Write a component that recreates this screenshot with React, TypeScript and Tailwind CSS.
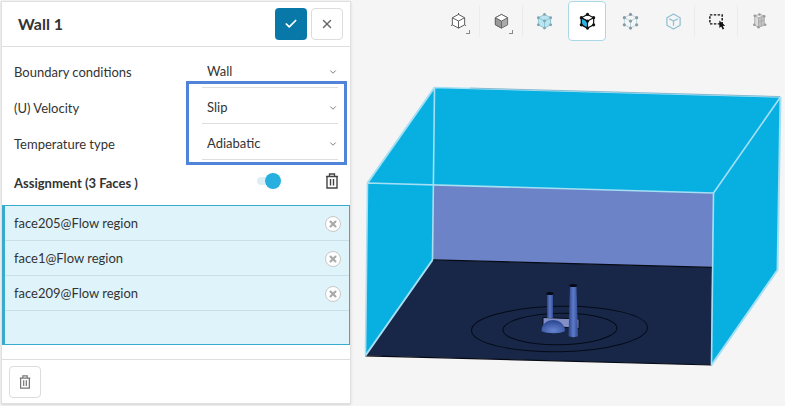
import React, { useState } from 'react';
import { Check, ChevronDown, X } from 'lucide-react';
import { clsx } from 'clsx';

type ToolId = 'wireframe' | 'solid' | 'volume' | 'face' | 'vertex' | 'edge' | 'box' | 'hidden';

const CUBE_OUTLINE = 'M9 1.5 15.5 5v7.5L9 16l-6.5-3.5V5z';
const CUBE_INNER = 'M2.5 5 9 8.5 15.5 5M9 8.5V16';
const CUBE_POINTS = [[9, 1.5], [15.5, 5], [15.5, 12.5], [9, 16], [2.5, 12.5], [2.5, 5], [9, 8.5]];

function Points({ fill, r }: { fill: string; r: number }) {
    return (
        <g fill={fill} stroke="none">
            {CUBE_POINTS.map(([x, y]) => (
                <circle key={`${x}-${y}`} cx={x} cy={y} r={r} />
            ))}
        </g>
    );
}

function ToolIcon({ id }: { id: ToolId }) {
    return (
        <svg viewBox="0 0 18 18" className="h-[17px] w-[17px] overflow-visible" fill="none" aria-hidden="true">
            {id === 'wireframe' && (
                <g stroke="#555" strokeWidth="1">
                    <path d={CUBE_OUTLINE} fill="#fff" />
                    <path d={CUBE_INNER} />
                    <path d="M9 0v2M2.5 12.5 1 13.5M15.5 12.5 17 13.5" />
                </g>
            )}
            {id === 'solid' && (
                <g stroke="#666" strokeWidth="1" strokeLinejoin="round">
                    <path d={CUBE_OUTLINE} fill="#aaa" />
                    <path d="M2.5 5 9 8.5V16l-6.5-3.5z" fill="#999" />
                    <path d="M9 1.5 15.5 5 9 8.5 2.5 5z" fill="#fff" />
                </g>
            )}
            {id === 'volume' && (
                <g stroke="#8cc5d6" strokeWidth="1">
                    <path d={CUBE_OUTLINE} fill="#b9e5f1" />
                    <path d={CUBE_INNER} />
                    <Points fill="#84a3ad" r={1.5} />
                </g>
            )}
            {id === 'face' && (
                <g stroke="#111" strokeWidth="1.2">
                    <path d={CUBE_OUTLINE} fill="#fff" />
                    <path d="M2.5 5 9 8.5V16l-6.5-3.5z" fill="#27b4e3" />
                    <path d={CUBE_INNER} />
                    <Points fill="#111" r={1.7} />
                </g>
            )}
            {id === 'vertex' && (
                <g stroke="#b9d5df" strokeWidth="1">
                    <path d={CUBE_OUTLINE} />
                    <path d={CUBE_INNER} />
                    <Points fill="#8a9ba3" r={1.7} />
                </g>
            )}
            {id === 'edge' && (
                <g stroke="#8fc0d1" strokeWidth="1.3" strokeLinejoin="round">
                    <path d="M9 1 16 5v8l-7 4-7-4V5z" />
                    <path d="M4.5 6.2 9 8.5l4.5-2.3M9 8.5v5" />
                </g>
            )}
            {id === 'box' && (
                <>
                    <path d="M2 2h13v9.5H2z" stroke="#111" strokeWidth="1.5" strokeDasharray="2.6 1.5" />
                    <path d="M12 8v8l2-1.6 1.5 3 1.6-.8-1.4-2.9 2.5-.2z" fill="#111" />
                </>
            )}
            {id === 'hidden' && (
                <g stroke="#aaa" strokeWidth="1">
                    <path d="M4 3 8 5v10l-4-2z" fill="#ddd" />
                    <path d="M8 5l6-2v10l-6 2z" fill="#c4c4c4" />
                    <path d="M4 3l5-1.5L14 3M11 4v10M14 7.5l-6 2" />
                    <g fill="#999" stroke="none">
                        <circle cx="4" cy="3" r="1.3" />
                        <circle cx="9" cy="1.5" r="1.3" />
                        <circle cx="14" cy="3.5" r="1.3" />
                        <circle cx="15" cy="12.5" r="1.3" />
                        <circle cx="8" cy="15" r="1.3" />
                        <circle cx="3.5" cy="12.5" r="1.3" />
                    </g>
                </g>
            )}
        </svg>
    );
}

function TrashIcon({ className }: { className: string }) {
    return (
        <svg viewBox="0 0 16 16" className={className} fill="none" stroke="currentColor" strokeWidth="1.4" aria-hidden="true">
            <path d="M2 3.5h12M5.5 3.5V1h5v2.5M3 3.5V15h10V3.5M6.5 6v6.5M9.5 6v6.5" />
        </svg>
    );
}

const tools: { id: ToolId; label: string; menu?: boolean; divider?: boolean }[] = [
    { id: 'wireframe', label: 'Wireframe', menu: true, divider: true },
    { id: 'solid', label: 'Shaded', menu: true, divider: true },
    { id: 'volume', label: 'Select volumes' },
    { id: 'face', label: 'Select faces' },
    { id: 'vertex', label: 'Select vertices' },
    { id: 'edge', label: 'Select edges', divider: true },
    { id: 'box', label: 'Box selection', divider: true },
    { id: 'hidden', label: 'Hide selection' },
];

function Toolbar() {
    const [active, setActive] = useState<ToolId>('face');

    return (
        <div className="flex items-center justify-end gap-0.5 pt-px pr-1">
            {tools.map((tool) => (
                <React.Fragment key={tool.id}>
                    <button
                        type="button"
                        aria-label={tool.label}
                        aria-pressed={active === tool.id}
                        onClick={() => setActive(tool.id)}
                        className={clsx(
                            'relative flex h-10 w-[38px] items-center justify-center rounded border',
                            active === tool.id ? 'border-[#a9d9e6] bg-white' : 'border-transparent',
                        )}
                    >
                        <ToolIcon id={tool.id} />
                        {tool.menu && <span className="absolute right-1.5 bottom-1.5 h-1 w-1 border-r border-b border-[#888]" />}
                    </button>
                    <span className={clsx('h-8 w-px', tool.divider && 'bg-[#ececec]')} />
                </React.Fragment>
            ))}
        </div>
    );
}

function Scene() {
    return (
        <svg viewBox="351 41 434 365" className="block w-full" role="img" aria-label="Flow region">
            <defs>
                <linearGradient id="pipe">
                    <stop offset="0" stopColor="#2d4484" />
                    <stop offset="0.5" stopColor="#5c7bcb" />
                    <stop offset="1" stopColor="#334b90" />
                </linearGradient>
                <radialGradient id="dome" cx="0.5" cy="0.8" r="0.7">
                    <stop offset="0" stopColor="#6685d0" />
                    <stop offset="1" stopColor="#2f4b98" />
                </radialGradient>
            </defs>

            {/* Walls and ceiling */}
            <path d="M434.5 87.5 780.5 97 777.5 270 711.5 365 713.5 193 432.5 260 365.5 355.5 367.5 183z" fill="#08b0e2" />
            <path d="M433 185 713.5 193 712 268 432.5 260z" fill="#6d83c8" />
            <path d="M713.5 193 780.5 97 777.5 270 711.5 365z" fill="#08b0e2" />

            {/* Floor */}
            <path d="M432.5 260 712 267.5 711.5 365 365.5 355.5z" fill="#182747" />
            <path d="M432.5 259.8 712 267.3M365.5 355.8 711.5 365" stroke="#060a14" strokeWidth="1.2" />
            <g fill="none" stroke="#050a18" strokeWidth="1">
                <ellipse cx="559.5" cy="329" rx="88" ry="22.7" transform="rotate(-1 559.5 329)" />
                <ellipse cx="560" cy="329" rx="57" ry="15.7" transform="rotate(-1 560 329)" />
            </g>

            {/* Model */}
            <path d="M543 317.5 579 319v9.5l-36-3z" fill="#8390c7" stroke="#080d1c" strokeWidth="1" />
            <path d="M547 294h6v24h-6z" fill="url(#pipe)" />
            <ellipse cx="550" cy="293.5" rx="3.7" ry="1.5" fill="#050914" />
            <path d="M541.5 331c0-6.5 5-11 11.5-11s12 4.5 12 11c-4 3-19 3-23.5 0z" fill="url(#dome)" />
            <path d="M570 286h6.5l1.5 50c-2 1.5-7 1.5-9.5 0z" fill="url(#pipe)" />
            <ellipse cx="573.2" cy="285.5" rx="3.9" ry="1.5" fill="#050914" />

            {/* Highlighted edges */}
            <g fill="none" stroke="#a5dff4" strokeWidth="1.6" strokeLinejoin="round">
                <path d="M434.5 87.5 780.5 97M367.5 183 713.5 193 711.5 365M434.5 87.5 432.5 260M780.5 97 713.5 193M367.5 183 365.5 355.5" />
                <path d="M434.5 87.5 367.5 183M432.5 260 365.5 355.5M780.5 97 777.5 270 711.5 365" strokeWidth="2" />
            </g>
            <path d="M470 88 780 96.5" stroke="#5f94ae" strokeWidth="0.5" />
        </svg>
    );
}

function SelectField({ id, label, options }: { id: string; label: string; options: string[] }) {
    return (
        <div className="flex h-9 items-center justify-between pr-3 pl-3">
            <label htmlFor={id} className="pt-1.5">{label}</label>
            <div className="relative h-full w-[136px] border-b border-[#dedede]">
                <select id={id} className="h-full w-full appearance-none bg-transparent pt-1 pl-[5px] outline-none">
                    {options.map((option) => (
                        <option key={option}>{option}</option>
                    ))}
                </select>
                <ChevronDown className="pointer-events-none absolute top-[15px] right-0 h-2.5 w-2.5 text-[#666]" />
            </div>
        </div>
    );
}

function SettingsPanel() {
    const [faces, setFaces] = useState(['face205@Flow region', 'face1@Flow region', 'face209@Flow region']);

    return (
        <section className="mt-px mb-px ml-px flex w-[350px] shrink-0 flex-col self-start border border-[#e0e0e0] bg-white shadow-sm">
            <header className="flex h-[45px] items-center gap-1 border-b border-[#dedede] pr-[7px] pl-4">
                <h1 className="flex-1 text-base font-bold">Wall 1</h1>
                <button type="button" aria-label="Apply" className="flex h-8 w-8 items-center justify-center rounded bg-[#0878a8] text-white">
                    <Check className="h-3.5 w-3.5" strokeWidth={3} />
                </button>
                <button type="button" aria-label="Close" className="flex h-8 w-8 items-center justify-center rounded border border-[#dcdcdc] text-[#666]">
                    <X className="h-3.5 w-3.5" strokeWidth={2.5} />
                </button>
            </header>

            <div className="relative pt-[5px]">
                <SelectField id="condition" label="Boundary conditions" options={['Wall', 'Symmetry']} />
                <SelectField id="velocity" label="(U) Velocity" options={['Slip', 'No-slip']} />
                <SelectField id="temperature" label="Temperature type" options={['Adiabatic', 'Fixed value']} />
                <div className="pointer-events-none absolute top-[34px] right-[3px] -bottom-[5px] w-[161px] border-3 border-[#4f84d8]" />
            </div>

            <div className="flex h-[45px] items-center pr-2.5 pb-1 pl-3">
                <h2 className="flex-1 pt-1.5 font-bold">Assignment (3 Faces )</h2>
                <label className="mr-[43px] flex h-4 w-6 cursor-pointer items-center">
                    <input type="checkbox" defaultChecked aria-label="Toggle assignment" className="peer sr-only" />
                    <span className="h-2 w-2 rounded-l-full bg-[#dceff4]" />
                    <span className="h-4 w-4 rounded-full bg-[#bbb] peer-checked:bg-[#27b0df]" />
                </label>
                <button type="button" aria-label="Clear assignment" className="text-[#444]">
                    <TrashIcon className="h-4 w-4" />
                </button>
            </div>

            <ul className="min-h-[140px] border border-l-3 border-[#38acce] bg-[#dff3fa]">
                {faces.map((face) => (
                    <li key={face} className="flex h-[35px] items-center justify-between border-b border-[#c8dfe7] pt-px pr-2 pl-[9px]">
                        <span>{face}</span>
                        <button
                            type="button"
                            aria-label={`Remove ${face}`}
                            onClick={() => setFaces(faces.filter((item) => item !== face))}
                            className="flex h-4 w-4 items-center justify-center rounded-full border border-[#c8c8c8] bg-white text-[#aaa]"
                        >
                            <X className="h-2.5 w-2.5" strokeWidth={5} />
                        </button>
                    </li>
                ))}
            </ul>

            <footer className="mt-3.5 border-t border-[#dedede] px-[7px] pt-1.5 pb-[5px]">
                <button type="button" aria-label="Delete" className="flex h-8 w-8 items-center justify-center rounded border border-[#dcdcdc] text-[#777]">
                    <TrashIcon className="h-3.5 w-3.5" />
                </button>
            </footer>
        </section>
    );
}

export default function App() {
    return (
        <div className="flex min-h-screen bg-[#f5f5f5] font-['Lato',sans-serif] text-[13px] text-[#333]">
            <SettingsPanel />
            <main className="min-w-0 flex-1">
                <Toolbar />
                <Scene />
            </main>
        </div>
    );
}
